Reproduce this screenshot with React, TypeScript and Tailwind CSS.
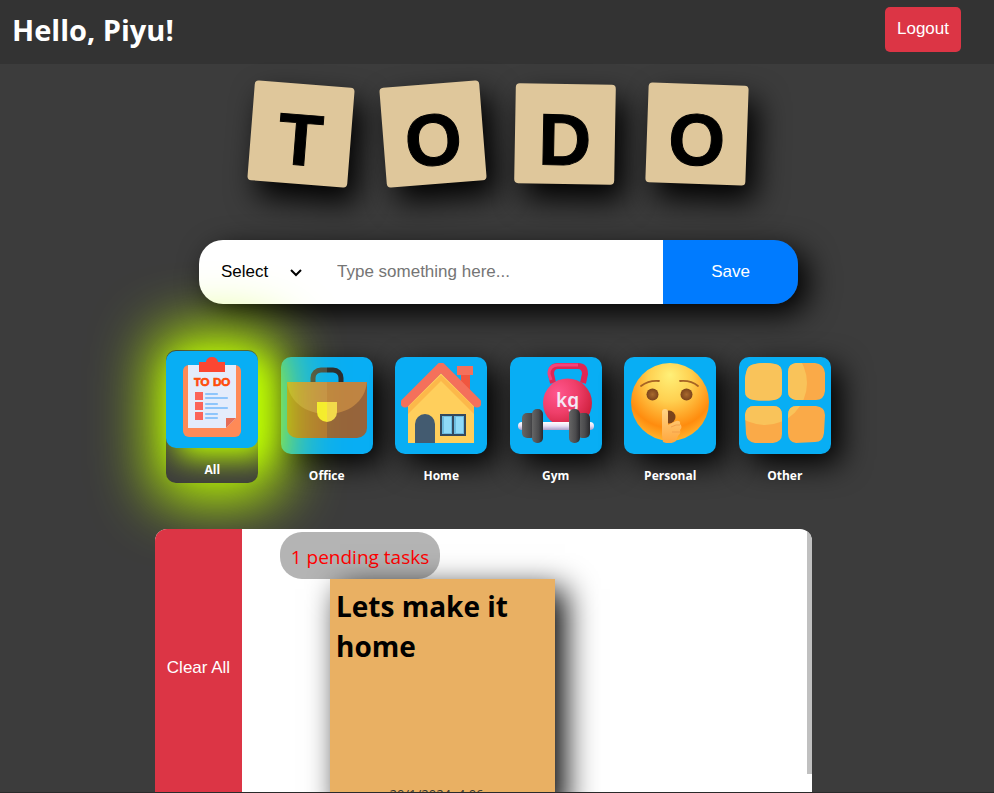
import React, { useState } from 'react';

const letters = [
  { char: 'T', tilt: 'rotate-[4.5deg]' },
  { char: 'O', tilt: '-rotate-[4.5deg]' },
  { char: 'D', tilt: 'rotate-[1deg]' },
  { char: 'O', tilt: 'rotate-[2deg]' },
];

function ClipboardIcon() {
  return (
    <svg viewBox="0 0 80 80" className="size-20" aria-hidden="true">
      <rect x="11" y="8" width="58" height="72" rx="6" fill="#ff8a57" />
      <path d="M16 8h48v53l-10 10H16z" fill="#e4ecfb" />
      <path d="M54 61h10L54 71z" fill="#e56c57" />
      <path d="M27 5h7a6 5 0 0 1 12 0h7v10H27z" fill="#fb4632" />
      <g className="font-['Lato'] text-[11px] font-black" fill="#ff4d0c" stroke="#ff4d0c" strokeWidth="0.7">
        <text x="22" y="29">TO</text>
        <text x="41" y="29">DO</text>
      </g>
      <g fill="#fb6459">
        <rect x="23" y="35" width="8" height="8" />
        <rect x="23" y="45" width="8" height="8" />
        <rect x="23" y="55" width="8" height="8" />
      </g>
      <g stroke="#8ec5fb" strokeWidth="2.2" strokeLinecap="round">
        <path d="M34 37h11M34 41h21M34 47h11M34 51h21M34 57h11M34 61h11" />
      </g>
    </svg>
  );
}

function BriefcaseIcon() {
  return (
    <svg viewBox="0 0 80 80" className="size-20" aria-hidden="true">
      <path d="M26 21v-6a8 8 0 0 1 8-8h6" fill="none" stroke="#4a4a4a" strokeWidth="5" />
      <path d="M40 7h6a8 8 0 0 1 8 8v6" fill="none" stroke="#2b2b30" strokeWidth="5" />
      <path d="M0 19h40v56H10A10 10 0 0 1 0 65z" fill="#b17434" />
      <path d="M40 19h40v46a10 10 0 0 1-10 10H40z" fill="#96643b" />
      <path d="M0 19h40v32C19 51 2 39 0 19z" fill="#c68f4b" />
      <path d="M80 19H40v32c21 0 38-12 40-32z" fill="#bf8442" />
      <path d="M30 39h10v20a10 10 0 0 1-10-10z" fill="#f9ec31" />
      <path d="M40 39h10v10a10 10 0 0 1-10 10z" fill="#f4d94d" />
    </svg>
  );
}

function HouseIcon() {
  return (
    <svg viewBox="0 0 80 80" className="size-20" aria-hidden="true">
      <path d="M60 10h9v22l-9-9z" fill="#f0563f" />
      <path d="M7 42l33-32 33 32v38H7z" fill="#ffcf5c" />
      <path d="M7 44l33-32 33 32v7L40 18 7 51z" fill="#fcb84a" />
      <path d="M4 40L40 4l36 36" fill="none" stroke="#f4705b" strokeWidth="9" strokeLinecap="round" strokeLinejoin="round" />
      <rect x="56" y="3" width="16" height="9" fill="#f4705b" />
      <path d="M14 80V61a10 10 0 0 1 20 0v19z" fill="#435b70" />
      <path d="M39 51h26v22H39z" fill="#34495e" />
      <path d="M41 53h10v18H41zM53 53h10v18H53z" fill="#6dbce0" />
      <path d="M43 54h7v16h-7zM55 54h7v16h-7z" fill="#8fdaf8" />
    </svg>
  );
}

function GymIcon() {
  return (
    <svg viewBox="0 0 80 80" className="size-20" aria-hidden="true">
      <defs>
        <radialGradient id="kettle" cx="0.3" cy="0.3" r="0.8">
          <stop offset="0" stopColor="#ff568e" />
          <stop offset="0.5" stopColor="#ef3f6a" />
          <stop offset="1" stopColor="#cb1d38" />
        </radialGradient>
        <linearGradient id="plate">
          <stop offset="0" stopColor="#666" />
          <stop offset="0.6" stopColor="#4b4b4d" />
          <stop offset="1" stopColor="#29292d" />
        </linearGradient>
        <linearGradient id="bar" x2="0" y2="1">
          <stop offset="0" stopColor="#fff" />
          <stop offset="0.5" stopColor="#e7dff4" />
          <stop offset="1" stopColor="#aaa0ca" />
        </linearGradient>
      </defs>
      <path d="M37 20l-2-9q0-8 7-8h20q7 0 7 8l-2 9" fill="none" stroke="#df2654" strokeWidth="6" />
      <path d="M35 17l-2-6q0-9 9-9h20" fill="none" stroke="#f5437b" strokeWidth="3" />
      <circle cx="51.500" cy="40" r="24.500" fill="url(#kettle)" />
      <text x="51.500" y="44" textAnchor="middle" className="font-['Noto_Sans'] text-[19px] font-semibold" fill="#f4e8f6">kg</text>
      <rect x="2" y="59" width="76" height="8" rx="4" fill="url(#bar)" />
      <g fill="url(#plate)">
        <rect x="6" y="50" width="14" height="25" rx="5" />
        <rect x="16" y="46" width="11" height="34" rx="5" />
        <rect x="61" y="50" width="13" height="25" rx="5" />
        <rect x="53" y="46" width="11" height="34" rx="5" />
      </g>
    </svg>
  );
}

function ShushIcon() {
  return (
    <svg viewBox="0 0 80 80" className="size-20" aria-hidden="true">
      <defs>
        <radialGradient id="face" cx="0.5" cy="0.3" r="0.7" fy="0.15">
          <stop offset="0" stopColor="#fff078" />
          <stop offset="0.4" stopColor="#ffd050" />
          <stop offset="0.8" stopColor="#ff8c0e" />
          <stop offset="1" stopColor="#ffb52f" />
        </radialGradient>
        <radialGradient id="eye">
          <stop offset="0" stopColor="#a8692e" />
          <stop offset="1" stopColor="#7b431b" />
        </radialGradient>
        <linearGradient id="hand" x2="0" y2="1">
          <stop offset="0" stopColor="#ffd486" />
          <stop offset="1" stopColor="#ffa63c" />
        </linearGradient>
      </defs>
      <circle cx="40" cy="39" r="39" fill="url(#face)" />
      <path d="M11 23q8-6 18-5M50 18q11-1 18 5" fill="none" stroke="#a76424" strokeWidth="1.8" strokeLinecap="round" />
      <circle cx="22.500" cy="31.500" r="6" fill="url(#eye)" />
      <circle cx="56.500" cy="31.500" r="6" fill="url(#eye)" />
      <circle cx="39" cy="54" r="6.500" fill="#7b431b" />
      <path d="M32 49q0-3 3-3t3 3v13l8-4q5-1 4 3 3 3 0 6 1 4-2 6l-2 5q-6 4-13 1l-1-7z" fill="url(#hand)" />
      <path d="M41 64l5-2h4M42 69h8" fill="none" stroke="#f3a04b" strokeWidth="1" />
    </svg>
  );
}

function GridIcon() {
  return (
    <svg viewBox="0 0 80 80" className="size-20" aria-hidden="true">
      <defs>
        <clipPath id="cells">
          <path d="M10 1Q20-1 30 1Q37 2 37 10V28Q37 36 29 37Q19 38 9 37Q0 36 0 28Q-1 19 1 10Q2 2 10 1z" />
          <path d="M51 0H70Q79 1 80 10V28Q79 37 71 37H51Q43 36 43 28V9Q43 1 51 0z" />
          <path d="M9 43H28Q37 43 37 52V71Q37 79 28 80H10Q2 79 1 71L0 52Q1 43 9 43z" />
          <path d="M52 43H71Q80 44 80 52L79 70Q78 79 70 79L51 80Q43 79 43 70V52Q43 43 52 43z" />
        </clipPath>
      </defs>
      <g clipPath="url(#cells)">
        <rect width="80" height="80" fill="#faaa48" />
        <circle cx="20" cy="20" r="42" fill="#f9c35a" />
      </g>
    </svg>
  );
}

const categories = [
  { name: 'All', Icon: ClipboardIcon },
  { name: 'Office', Icon: BriefcaseIcon },
  { name: 'Home', Icon: HouseIcon },
  { name: 'Gym', Icon: GymIcon },
  { name: 'Personal', Icon: ShushIcon },
  { name: 'Other', Icon: GridIcon },
];

export default function App() {
  const [active, setActive] = useState('All');
  return (
    <div className="h-screen overflow-hidden border-b border-[#2a2a2a] bg-[#3c3c3c] font-['Open_Sans','Noto_Sans',sans-serif] text-white">
      <header className="flex h-16 items-start justify-between bg-[#333] pt-[7px] pr-[33px] pl-3">
        <h1 className="text-[29px] leading-[45px] font-bold">Hello, Piyu!</h1>
        <button className="h-[45px] rounded-[5px] bg-[#dc3545] px-3 pb-0.5 font-['Liberation_Sans',Arial,sans-serif] text-[17px]">
          Logout
        </button>
      </header>

      <main className="mx-auto max-w-[690px] pt-5 pl-[3px]">
        <div className="flex justify-center gap-8">
          {letters.map(({ char, tilt }, i) => (
            <div
              key={i}
              className={`flex size-[100px] items-center justify-center rounded-[4px] bg-[#dfc79b] pt-2.5 font-['Liberation_Sans',Arial,sans-serif] text-[73px] leading-none font-bold text-black shadow-[10px_15px_30px_#000] [-webkit-text-stroke:1px_#000] ${tilt}`}
            >
              {char}
            </div>
          ))}
        </div>

        <form
          onSubmit={(e) => e.preventDefault()}
          className="mx-11 mt-14 flex h-16 rounded-[24px] font-['Liberation_Sans',Arial,sans-serif] text-[17px] text-black shadow-[10px_10px_30px_#000]"
        >
          <div className="relative w-[122px]">
            <select aria-label="Category" className="h-full w-full appearance-none rounded-l-[24px] bg-white pl-[22px]">
              <option>Select</option>
              {categories.slice(1).map((c) => (
                <option key={c.name}>{c.name}</option>
              ))}
            </select>
            <svg viewBox="0 0 12 8" className="pointer-events-none absolute top-[29px] right-[19px] h-2 w-3" aria-hidden="true">
              <path d="M1 1l5 5 5-5" fill="none" stroke="#000" strokeWidth="2" />
            </svg>
          </div>
          <input
            aria-label="New task"
            placeholder="Type something here..."
            className="min-w-0 flex-1 bg-white px-4 outline-none placeholder:text-[#757575]"
          />
          <button className="w-[135px] rounded-r-[24px] bg-[#007bff] text-white">Save</button>
        </form>

        <nav className="mt-[52px] grid grid-cols-6 justify-items-center">
          {categories.map(({ name, Icon }) => {
            const on = name === active;
            return (
              <button
                key={name}
                onClick={() => setActive(name)}
                className={`flex h-[133px] w-[92px] flex-col items-stretch justify-start rounded-[10px] pt-px ${
                  on ? 'relative -translate-y-1.5 bg-[#3c3c3c] shadow-[5px_0_60px_18px_#bfff00]' : ''
                }`}
              >
                <span
                  className={`flex h-[97px] items-start justify-center rounded-[10px] bg-[#08aef4] pt-1.5 ${
                    on ? 'shadow-[10px_10px_30px_#bfff00]' : 'shadow-[10px_10px_30px_#000]'
                  }`}
                >
                  <Icon />
                </span>
                <span className="relative block pt-[13px] text-[12px] leading-[18px] font-bold">{name}</span>
              </button>
            );
          })}
        </nav>

        <section className="relative mt-10 mr-[30px] flex h-[278px] overflow-hidden rounded-[12px] bg-white">
          <button className="w-[87px] shrink-0 bg-[#dc3545] font-['Liberation_Sans',Arial,sans-serif] text-[17px]">
            Clear All
          </button>
          <div className="min-w-0 flex-1 overflow-hidden pt-[3px] pl-[38px]">
            <p className="flex h-[47px] w-40 items-center justify-center rounded-[22px] bg-[#b4b4b4] pt-1 text-[19px] font-medium text-[#f00]">
              1 pending tasks
            </p>
            <article className="relative ml-[50px] flex h-[228px] w-[225px] flex-col justify-between bg-[#e9b063] px-1.5 pt-[7px] pb-[3px] text-black shadow-[10px_10px_30px_#000]">
              <h2 className="text-[28px] leading-10 font-bold">Lets make it home</h2>
              <time className="pr-3 text-center text-[13px] leading-5 text-[#333]">20/1/2024, 4:06</time>
            </article>
          </div>
          <div className="h-[245px] w-[5px] bg-[#c0c0c0]" />
        </section>
      </main>
    </div>
  );
}
